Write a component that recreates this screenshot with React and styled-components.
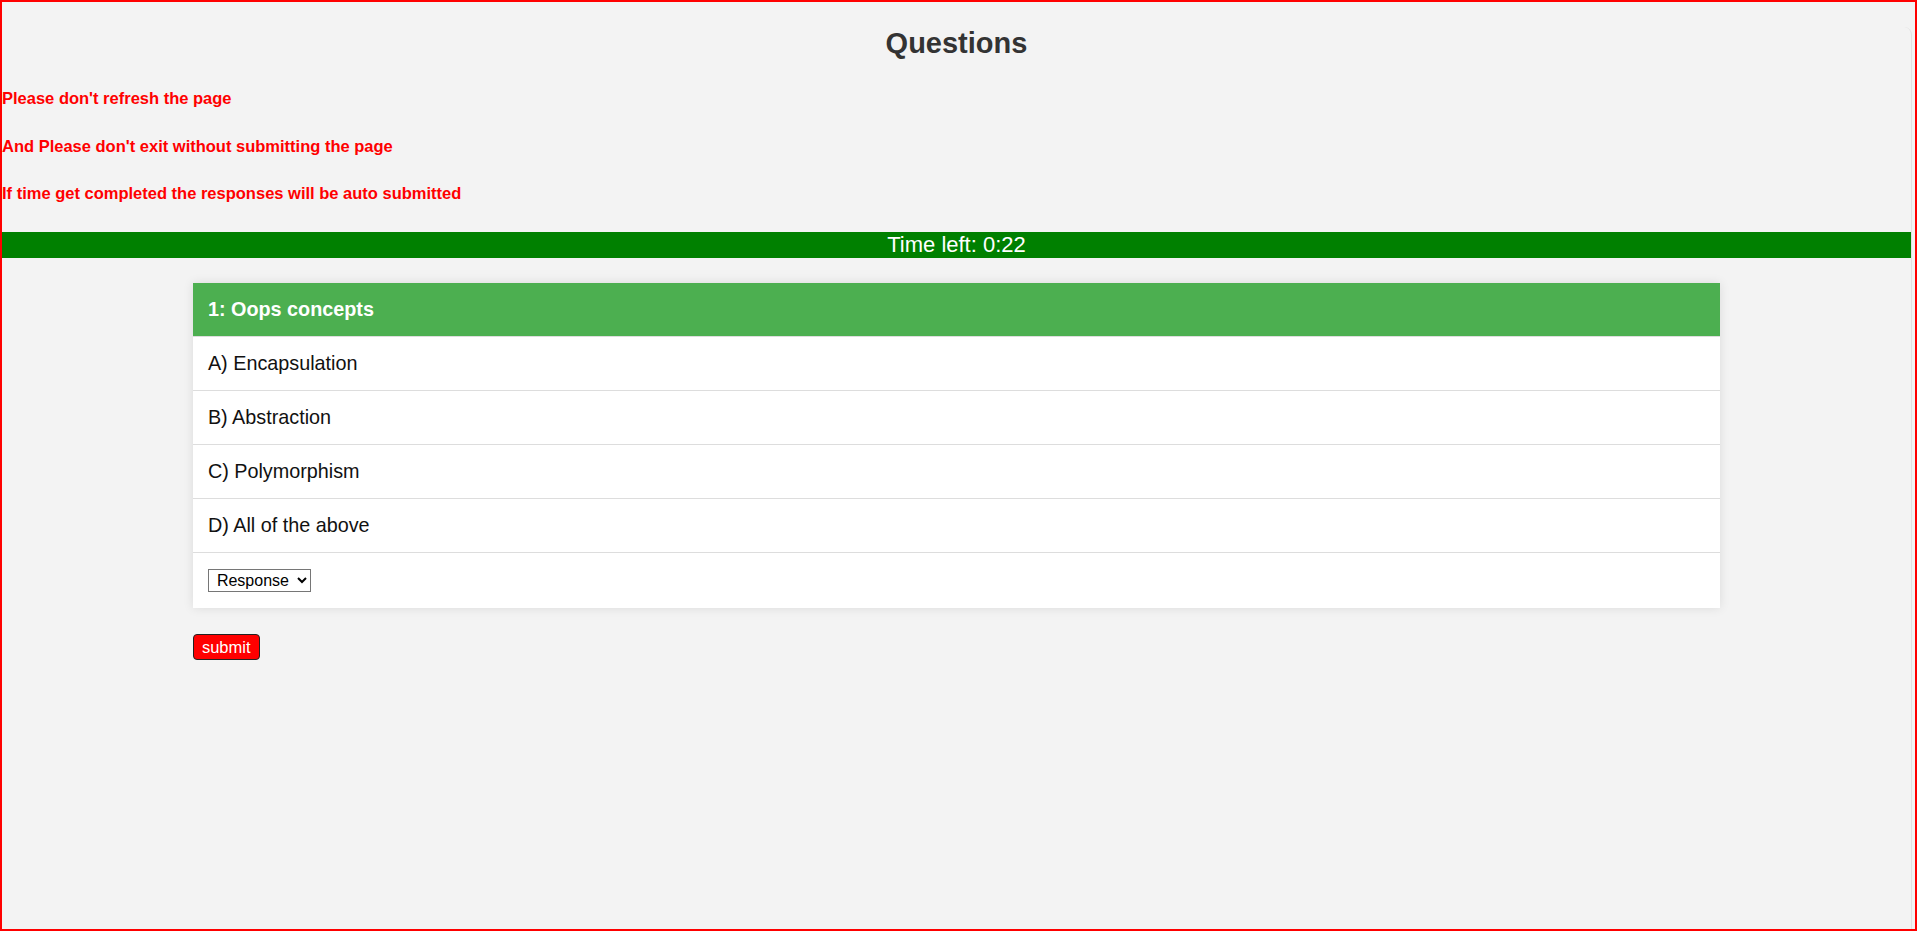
import React from 'react';
import styled, { createGlobalStyle } from 'styled-components';

const GlobalStyle = createGlobalStyle`
  html, body {
    margin: 0;
    padding: 0;
    background: #f3f3f3;
  }
  body {
    font-family: 'Liberation Sans', Arial, sans-serif;
  }
  * {
    box-sizing: border-box;
  }
`;

const Frame = styled.div`
  height: 931px;
  border: 2px solid #ff0000;
  padding-right: 3px;
  background: #f3f3f3;
  overflow: hidden;
`;

const Pane = styled.div`
  height: 100%;
  background: #f3f3f3;
  border-right: 1px solid #e1e1e1;
  border-radius: 0 8px 8px 0;
`;

const Title = styled.h1`
  margin: 25px 0 0;
  text-align: center;
  font-size: 29px;
  line-height: 33px;
  font-weight: 700;
  color: #333333;
`;

const Notices = styled.div`
  display: flex;
  flex-direction: column;
  gap: 28.5px;
  margin-top: 29px;
`;

const Notice = styled.p`
  margin: 0;
  font-size: 16.5px;
  line-height: 19px;
  font-weight: 700;
  color: #ff0000;
`;

const Timer = styled.div`
  margin-top: 29px;
  height: 26px;
  background: #008000;
  color: #ffffff;
  font-size: 22px;
  line-height: 26px;
  text-align: center;
`;

const Quiz = styled.div`
  width: 80%;
  margin: 25px auto 0;
`;

const Card = styled.div`
  background: #ffffff;
  box-shadow: 0 0 10px rgba(0, 0, 0, 0.1);
`;

const CardHeader = styled.div`
  background: #4caf50;
  color: #ffffff;
  font-size: 19.8px;
  font-weight: 700;
  line-height: 21px;
  padding: 16px 15px;
  border-bottom: 1px solid #dddddd;
`;

const Option = styled.div`
  font-size: 19.8px;
  line-height: 21px;
  padding: 16px 15px;
  color: #111111;
  border-bottom: 1px solid #dddddd;
`;

const ResponseRow = styled.div`
  padding: 16px 15px;
`;

const Select = styled.select`
  height: 23px;
  font-family: 'Liberation Sans', Arial, sans-serif;
  font-size: 16px;
  color: #000000;
  background: #ffffff;
  border: 1px solid #767676;
  border-radius: 0;
  padding: 0 4px;
`;

const SubmitButton = styled.button`
  margin-top: 26px;
  height: 26px;
  padding: 0 8px;
  font-family: 'Liberation Sans', Arial, sans-serif;
  font-size: 16.5px;
  line-height: 22px;
  color: #ffffff;
  background: #ff0000;
  border: 1px solid #222222;
  border-radius: 4px;
  cursor: pointer;
`;

const notices = [
  "Please don't refresh the page",
  "And Please don't exit without submitting the page",
  'If time get completed the responses will be auto submitted',
];

const question = {
  title: '1: Oops concepts',
  options: ['A) Encapsulation', 'B) Abstraction', 'C) Polymorphism', 'D) All of the above'],
};

const App = () => {
  return (
    <>
      <GlobalStyle />
      <Frame>
        <Pane>
          <Title>Questions</Title>
          <Notices>
            {notices.map((n) => (
              <Notice key={n}>{n}</Notice>
            ))}
          </Notices>
          <Timer>Time left: 0:22</Timer>
          <Quiz>
            <Card>
              <CardHeader>{question.title}</CardHeader>
              {question.options.map((o) => (
                <Option key={o}>{o}</Option>
              ))}
              <ResponseRow>
                <Select defaultValue="">
                  <option value="">Response</option>
                  <option value="A">A</option>
                  <option value="B">B</option>
                  <option value="C">C</option>
                  <option value="D">D</option>
                </Select>
              </ResponseRow>
            </Card>
            <SubmitButton>submit</SubmitButton>
          </Quiz>
        </Pane>
      </Frame>
    </>
  );
};

export default App;
